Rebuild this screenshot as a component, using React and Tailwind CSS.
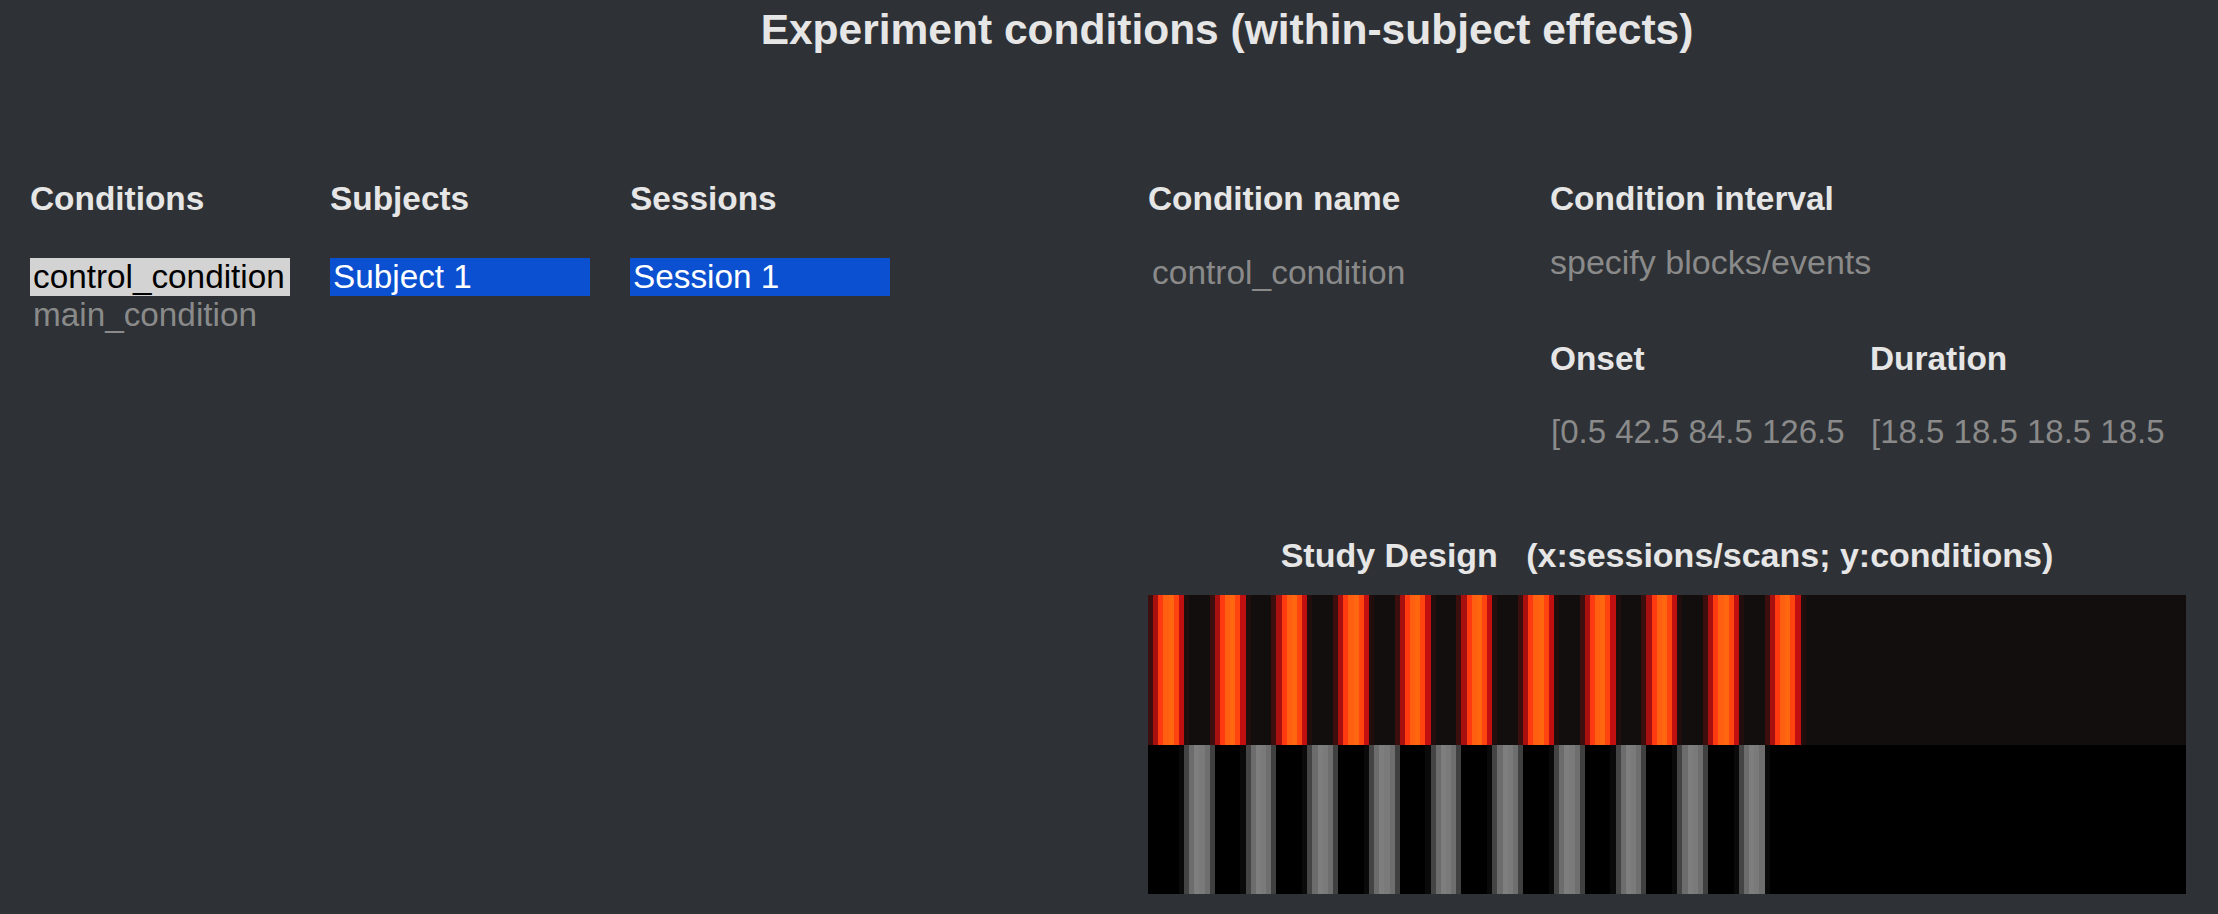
import { useMemo } from "react";

const CELLS = 202;

// colour profile of one 12-cell period in each row of the design image
const TOP = ["#3c0e0d", "#a81010", "#ff3a10", "#ff5f10", "#ff6610", "#ff4410", "#c21010", "#210e0d", "#120e0d", "#120e0d", "#120e0d", "#120e0d"];
const BOTTOM = ["#404040", "#000000", "#000000", "#000000", "#000000", "#000000", "#0a0a0a", "#444444", "#6c6c6c", "#7e7e7e", "#7a7a7a", "#6e6e6e"];

const topColor = (i) => {
    const p = Math.floor(i / 12);
    if (p > 10) return "#120e0d";
    return TOP[i % 12];
};

const bottomColor = (i) => {
    const p = Math.floor(i / 12);
    const c = i % 12;
    if (p === 0 && c === 0) return "#000000";
    if (p === 10 && c === 0) return "#0a0a0a";
    if (p >= 10) return "#000000";
    return BOTTOM[c];
};

// merge neighbouring cells of the same colour into one rect
const runs = (fn) => {
    const out = [];
    for (let i = 0; i < CELLS; i++) {
        const color = fn(i);
        const last = out[out.length - 1];
        if (last && last.color === color) last.w += 1;
        else out.push({ x: i, w: 1, color });
    }
    return out;
};

const DesignMatrix = () => {
    const rows = useMemo(() => [runs(topColor), runs(bottomColor)], []);
    return (
        <svg
            width="1038"
            height="299"
            viewBox={`0 0 ${CELLS} 2`}
            preserveAspectRatio="none"
            shapeRendering="crispEdges"
            className="block"
        >
            {rows.map((row, r) =>
                row.map((seg) => (
                    <rect key={`${r}-${seg.x}`} x={seg.x} y={r} width={seg.w} height={1} fill={seg.color} />
                ))
            )}
        </svg>
    );
};

const selectedStyle = (title) =>
    title === "Conditions" ? "bg-[#d3d3d3] text-black" : "bg-[#0b50d0] text-white";

const ListColumn = ({ title, items, selected }) => (
    <div className="w-[260px] flex flex-col">
        <h2 className="text-[33.4px] leading-[38px] font-bold text-[#e6e6e6]">{title}</h2>
        <ul className="mt-[40px] flex flex-col">
            {items.map((item) => {
                const active = item === selected;
                return (
                    <li
                        key={item}
                        className={`h-[38px] leading-[38px] pl-[3px] text-[33.3px] whitespace-nowrap ${
                            active ? selectedStyle(title) : "text-[#8a8a8a]"
                        }`}
                    >
                        {item}
                    </li>
                );
            })}
        </ul>
    </div>
);

const Field = ({ value, className }) => (
    <input
        readOnly
        value={value}
        className={`bg-transparent outline-none border-0 leading-[38px] h-[38px] text-[#8a8a8a] ${className}`}
    />
);

const App = () => {
    return (
        <div className="w-full h-[914px] overflow-hidden bg-[#2e3135] font-['Liberation_Sans',Arial,sans-serif]">
            <h1 className="pt-[5px] pl-[236px] text-center text-[42.5px] leading-[50px] font-bold text-[#e6e6e6]">
                Experiment conditions (within-subject effects)
            </h1>

            <div className="flex mt-[125px]">
                {/* lists */}
                <div className="w-[1148px] shrink-0 flex gap-[40px] pl-[30px]">
                    <ListColumn title="Conditions" items={["control_condition", "main_condition"]} selected="control_condition" />
                    <ListColumn title="Subjects" items={["Subject 1"]} selected="Subject 1" />
                    <ListColumn title="Sessions" items={["Session 1"]} selected="Session 1" />
                </div>

                {/* condition details */}
                <div className="flex flex-col">
                    <div className="flex">
                        <div className="w-[402px] flex flex-col">
                            <h2 className="text-[33.4px] leading-[38px] font-bold text-[#e6e6e6]">Condition name</h2>
                            <Field value="control_condition" className="mt-[36px] w-[380px] pl-[4px] text-[33.5px]" />
                        </div>
                        <div className="flex flex-col">
                            <h2 className="text-[33.4px] leading-[38px] font-bold text-[#e6e6e6]">Condition interval</h2>
                            <p className="mt-[25px] text-[34px] leading-[38px] text-[#8a8a8a]">specify blocks/events</p>
                            <div className="mt-[59px] flex">
                                <div className="w-[320px] flex flex-col">
                                    <h3 className="text-[33.4px] leading-[38px] font-bold text-[#e6e6e6]">Onset</h3>
                                    <Field
                                        value="[0.5 42.5 84.5 126.5 168.5 210.5 252.5 294.5 336.5 378.5 420.5]"
                                        className="mt-[35px] w-[303px] pl-[1px] text-[33px]"
                                    />
                                </div>
                                <div className="w-[320px] flex flex-col">
                                    <h3 className="text-[33.4px] leading-[38px] font-bold text-[#e6e6e6]">Duration</h3>
                                    <Field
                                        value="[18.5 18.5 18.5 18.5 18.5 18.5 18.5 18.5 18.5 18.5 18.5]"
                                        className="mt-[35px] w-[303px] pl-[1px] text-[33px]"
                                    />
                                </div>
                            </div>
                        </div>
                    </div>

                    <div className="w-[1038px] mt-[85px]">
                        <h2 className="text-center whitespace-pre text-[34px] leading-[38px] font-bold text-[#e6e6e6]">
                            {"Study Design   (x:sessions/scans; y:conditions)"}
                        </h2>
                        <div className="mt-[21px]">
                            <DesignMatrix />
                        </div>
                    </div>
                </div>
            </div>
        </div>
    );
};

export default App;
